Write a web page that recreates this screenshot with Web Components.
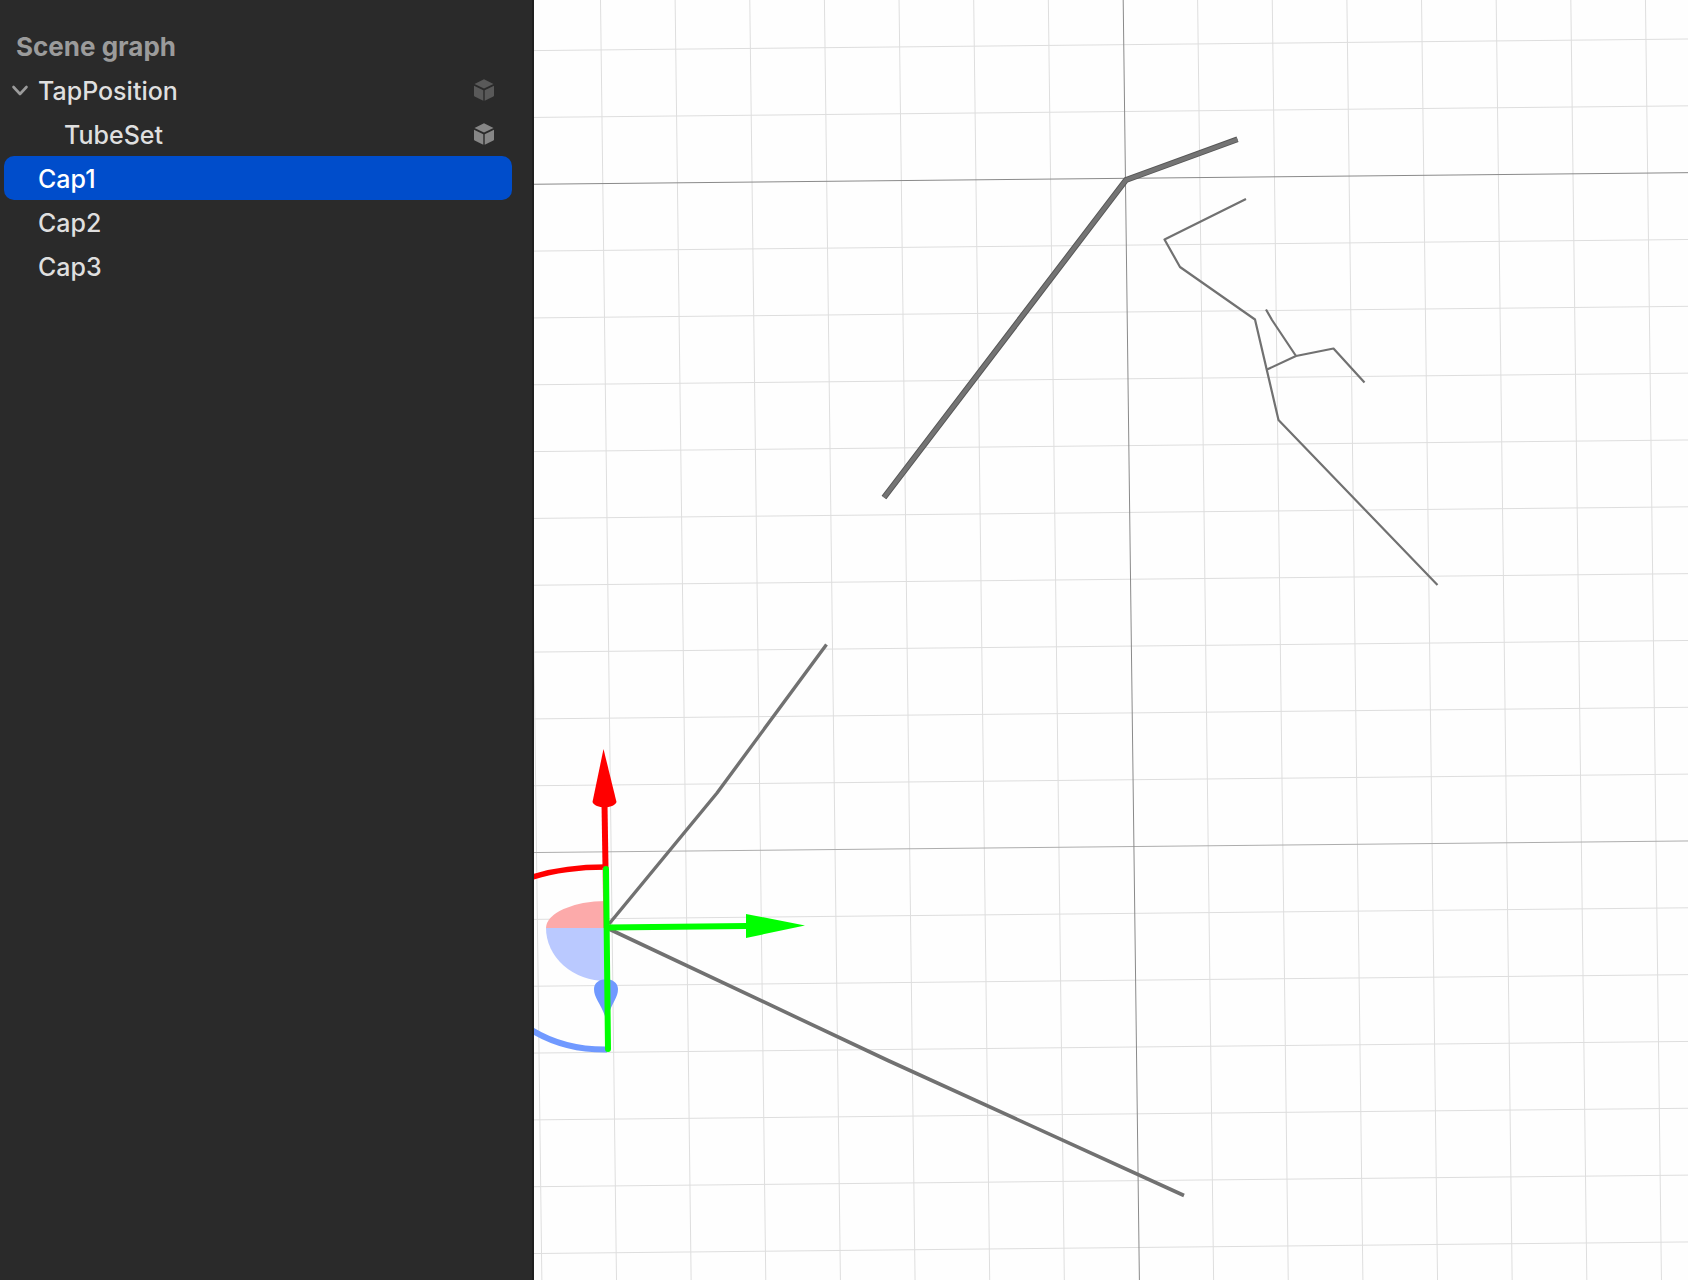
<!DOCTYPE html>
<html lang="en">
<head>
<meta charset="utf-8">
<title>Scene graph</title>
<style>
html, body { margin: 0; height: 100%; }
body { font-family: Inter, "Liberation Sans", sans-serif; background: #fff; }
</style>
</head>
<body>
<scene-editor>
  <scene-sidebar slot="sidebar" heading="Scene graph">
    <scene-node expandable icon="dim">TapPosition</scene-node>
    <scene-node nested icon="bright">TubeSet</scene-node>
    <scene-node selected>Cap1</scene-node>
    <scene-node>Cap2</scene-node>
    <scene-node>Cap3</scene-node>
  </scene-sidebar>
  <scene-viewport></scene-viewport>
</scene-editor>
<script>
class SceneEditor extends HTMLElement {
  constructor() {
    super();
    this.attachShadow({ mode: 'open' }).innerHTML = `
      <style>
        :host { display: flex; height: 100vh; overflow: hidden; }
        main { flex: 1; min-width: 0; display: flex; }
      </style>
      <slot name="sidebar"></slot>
      <main><slot></slot></main>`;
  }
}

class SceneSidebar extends HTMLElement {
  constructor() {
    super();
    this.attachShadow({ mode: 'open' }).innerHTML = `
      <style>
        :host { display: flex; flex-direction: column; flex: none; box-sizing: border-box; width: 534px;
          padding: 26px 20px 0 4px; background: #2a2a2a; border-right: 2px solid #1f1f1f; }
        h2 { margin: 0; padding-left: 12px; font-size: 26px; line-height: 42px; font-weight: 700; color: #9b9b9b; }
        nav { display: flex; flex-direction: column; }
      </style>
      <h2></h2>
      <nav aria-label="Scene graph"><slot></slot></nav>`;
  }
  connectedCallback() {
    this.shadowRoot.querySelector('h2').textContent = this.getAttribute('heading');
  }
}

class SceneNode extends HTMLElement {
  constructor() {
    super();
    this.attachShadow({ mode: 'open' }).innerHTML = `
      <style>
        :host { display: flex; align-items: center; box-sizing: border-box; height: 44px; padding-right: 17px;
          border-radius: 10px; color: #dfdfdf; }
        :host([selected]) { background: #004dcb; color: #fff; }
        button { appearance: none; border: 0; margin: 0; padding: 0; background: none; color: inherit; font: inherit; }
        .toggle { display: flex; flex: none; width: 34px; height: 44px; align-items: center; visibility: hidden; color: #9b9b9b; }
        :host([expandable]) .toggle { visibility: visible; }
        :host([nested]) .toggle { width: 60px; }
        .label { flex: 1; padding-top: 2px; text-align: left; font-size: 25px; line-height: 44px; font-weight: 500; }
        .cube { display: none; flex: none; }
        :host([icon]) .cube { display: block; }
        :host([icon="dim"]) .cube { color: #595959; }
        :host([icon="bright"]) .cube { color: #868686; }
      </style>
      <button class="toggle" aria-label="Toggle children">
        <svg width="32" height="24" viewBox="0 0 32 24" fill="none" stroke="currentColor" stroke-width="2.6" stroke-linecap="round" stroke-linejoin="round"><path d="M9.500 9 16 16 22.500 9"/></svg>
      </button>
      <button class="label"><slot></slot></button>
      <svg class="cube" width="22" height="24" viewBox="0 0 22 24" fill="currentColor" aria-hidden="true">
        <path d="M11 1.200 20.500 5.900 11 10.600 1.500 5.900Z"/><path d="M1 7.800 10.300 12.300V22.700L1.600 18.500Q1 18.200 1 17.500Z"/><path d="M21 7.800 11.700 12.300V22.700L20.400 18.500Q21 18.200 21 17.500Z"/>
      </svg>`;
  }
}

class SceneViewport extends HTMLElement {
  constructor() {
    super();
    this.attachShadow({ mode: 'open' }).innerHTML = `
      <style>
        :host { display: block; flex: 1; min-width: 0; background: #fefefe; }
        svg { display: block; width: 100%; height: 100%; }
        .minor { stroke: #dedede; }
        .major { stroke: #8a8a8a; }
        .far { stroke: #adadad; }
        .tube { fill: none; stroke: #717171; stroke-linejoin: round; }
      </style>
      <svg viewBox="534 0 1154 1280" preserveAspectRatio="xMinYMin slice" role="img" aria-label="3D viewport">
        <g id="grid"></g>
        <g class="tube">
          <path stroke="#575757" stroke-width="6" stroke-linejoin="miter" d="M884 497.500 1126 180 1237.500 139.300"/>
          <path stroke="#747474" stroke-width="4" stroke-linejoin="miter" d="M884 497.500 1126 180 1237.500 139.300"/>
          <path stroke-width="2.200" d="M1246 199 1164.500 239.500 1180 267 1255 319.500 1278.500 420 1437.500 585"/>
          <path stroke-width="2.200" d="M1267 369.500 1296 356 1333.500 348.500 1364.500 382.500M1266 309.500 1272 320 1296 356"/>
          <path stroke-width="3.400" d="M826.500 644.500 717 793 609 924"/>
          <path stroke-width="3.600" d="M609 929 888 1060.500 1184 1195.500"/>
        </g>
        <path fill="#fcaaaa" d="M546 928A60 27 0 0 1 606 901V928Z"/>
        <path fill="#bac9ff" d="M546 928A60 53 0 0 0 606 981V928Z"/>
        <path fill="none" stroke="#f00" stroke-width="5.500" d="M530 878Q562 867 606 867"/>
        <path fill="none" stroke="#7099ff" stroke-width="6" d="M530 1029Q563 1050 607 1049.500"/>
        <path stroke="#f66" stroke-width="4" d="M604.500 868 605.500 928"/>
        <path stroke="#f00" stroke-width="6" d="M604.500 804 605.500 868"/>
        <path fill="#f00" d="M603.500 749 616.500 802C614 809 595 809 592.500 802Z"/>
        <path fill="#7099ff" d="M594 989C594 976 618 976 618 989C618 998 612 1002 608 1016H605C600 1002 594 998 594 989Z"/>
        <g fill="none" stroke="#0f0" stroke-width="6">
          <path stroke-linecap="round" d="M606 869 608 1049"/>
          <path d="M607 927.500 747 926"/>
        </g>
        <path fill="#0f0" d="M746 914 805 925.500 746 938Z"/>
      </svg>`;
  }
  connectedCallback() {
    const lines = [];
    const add = (kind, x1, y1, x2, y2) =>
      lines.push(`<line class="${kind}" x1="${x1}" y1="${y1}" x2="${x2}" y2="${y2}"/>`);
    const rowKinds = { 2: 'major', 12: 'far' };
    // The camera is slightly rolled, so columns drift right and rows drift up.
    for (let i = -1; i < 15; i++) {
      if (i !== 7) { const x = 600.5 + i * 74.64; add('minor', x, 0, x + 16, 1280); }
    }
    for (let j = 0; j < 19; j++) {
      const y = 50.6 + j * 66.83;
      add(rowKinds[j] || 'minor', 534, y, 1688, y - 11.600);
    }
    add('major', 1123.2, 0, 1139.400, 1280);
    this.shadowRoot.getElementById('grid').innerHTML = lines.join('');
  }
}

customElements.define('scene-editor', SceneEditor);
customElements.define('scene-sidebar', SceneSidebar);
customElements.define('scene-node', SceneNode);
customElements.define('scene-viewport', SceneViewport);
</script>
</body>
</html>
